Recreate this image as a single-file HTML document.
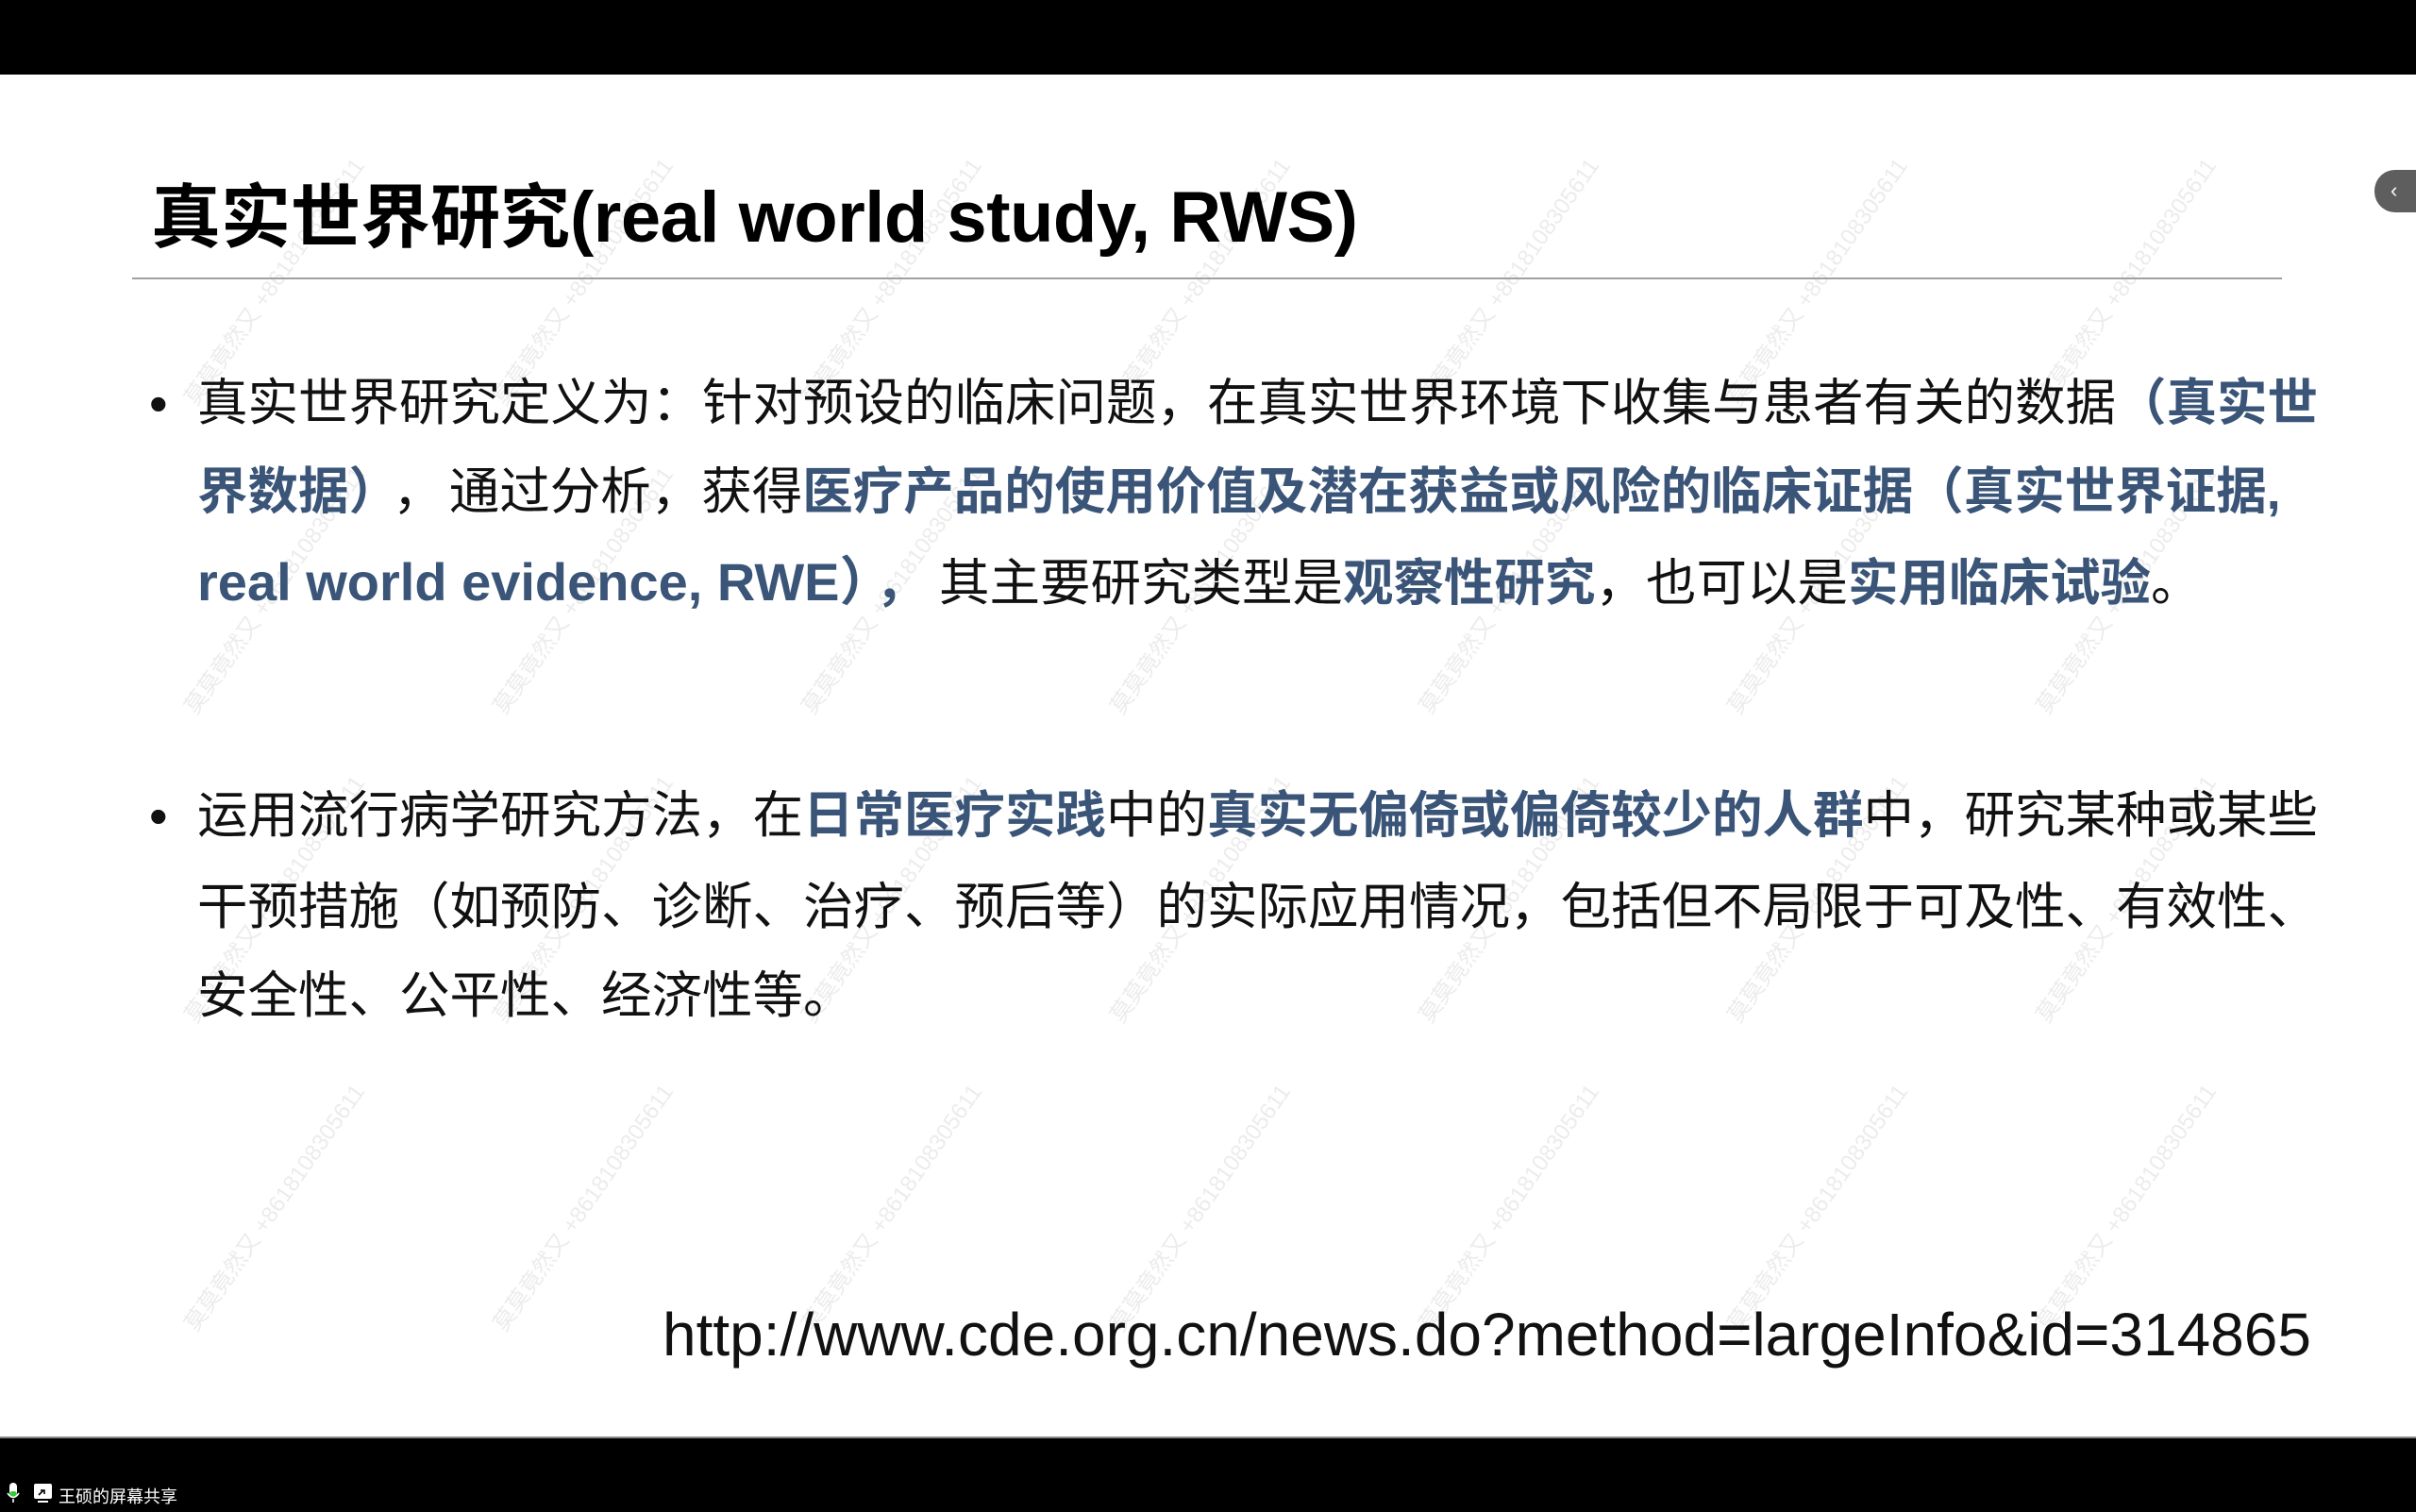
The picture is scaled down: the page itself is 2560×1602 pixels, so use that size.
<!DOCTYPE html>
<html><head><meta charset="utf-8"><style>
*{margin:0;padding:0}
body{width:2560px;height:1600px;background:#fff;position:relative;overflow:hidden;font-family:"Liberation Sans","Noto Sans CJK SC",sans-serif}
.top{position:absolute;left:0;top:0;width:2560px;height:79px;background:#000}
.bot{position:absolute;left:0;top:1522px;width:2560px;height:78px;background:#000;border-top:2px solid #888}
.title{position:absolute;left:160px;top:186px;font-size:74px;font-weight:bold;color:#000;white-space:nowrap;line-height:90px}
.title .en{font-family:"Liberation Sans",sans-serif;font-size:76px;letter-spacing:-0.5px}
.rule{position:absolute;left:140px;top:294px;width:2278px;height:2px;background:#a0a0a0}
.ln{position:absolute;left:209px;font-size:53.5px;line-height:96px;height:96px;white-space:nowrap;color:#111}
.b{color:#3a5578;font-weight:bold}
.dot{position:absolute;left:158px;font-size:56px;color:#111;line-height:96px}
.url{position:absolute;left:702px;top:1374px;font-family:"Liberation Sans",sans-serif;font-size:64px;line-height:80px;color:#111;white-space:nowrap}
.tab{position:absolute;left:2516px;top:180px;width:60px;height:45px;border-radius:22px 0 0 22px;background:#5e5e5e;color:#fff;font-size:22px;line-height:43px;padding-left:17px;box-sizing:border-box}
.wm{position:absolute;font-size:24px;color:#ececec;transform:rotate(-55deg);transform-origin:left top;white-space:nowrap}
.foot{position:absolute;left:62px;top:1572px;font-size:18px;color:#fff}
</style></head><body>
<div class="top"></div>
<div class="tab">&#8249;</div>

<div id="wms"></div>

<div class="title">真实世界研究<span class="en">(real world study, RWS)</span></div>
<div class="rule"></div>

<div class="dot" style="top:380px">•</div>
<div class="ln" style="top:380px">真实世界研究定义为：针对预设的临床问题，在真实世界环境下收集与患者有关的数据<span class="b">（真实世</span></div>
<div class="ln" style="top:474px"><span class="b">界数据）</span><span style="margin-left:20px">，</span><span style="margin-left:6px">通过分析，获得</span><span class="b">医疗产品的使用价值及潜在获益或风险的临床证据（真实世界证据,</span></div>
<div class="ln" style="top:569px"><span class="b" style="font-size:56px">real world evidence, RWE）</span><span class="b" style="margin-left:10px">，</span><span style="margin-left:14px">其主要研究类型是</span><span class="b">观察性研究</span>，也可以是<span class="b">实用临床试验</span>。</div>

<div class="dot" style="top:817px">•</div>
<div class="ln" style="top:817px">运用流行病学研究方法，在<span class="b">日常医疗实践</span>中的<span class="b">真实无偏倚或偏倚较少的人群</span>中，研究某种或某些</div>
<div class="ln" style="top:914px">干预措施（如预防、诊断、治疗、预后等）的实际应用情况，包括但不局限于可及性、有效性、</div>
<div class="ln" style="top:1008px">安全性、公平性、经济性等。</div>

<div class="url">http://www.cde.org.cn/news.do?method=largeInfo&amp;id=314865</div>

<div class="bot"></div>
<svg style="position:absolute;left:6px;top:1570px" width="60" height="28">
<rect x="4" y="1" width="8" height="15" rx="4" fill="#fff"/><rect x="4" y="10" width="8" height="6" rx="3" fill="#3c3"/>
<path d="M2 12 Q8 21 14 12 M8 18 V22" stroke="#fff" stroke-width="1.6" fill="none"/>
<rect x="30" y="2" width="19" height="16" rx="2" fill="#fff"/><path d="M35 14 L40 9 M37 9 H41 V13" stroke="#000" stroke-width="1.6" fill="none"/><rect x="34" y="20" width="11" height="2" fill="#fff"/>
</svg>
<div class="foot">王硕的屏幕共享</div>

<script>
var h='';
for(var c=0;c<7;c++){for(var r=0;r<4;r++){
 var x=185+c*327, y=415+r*327;
 h+='<div class="wm" style="left:'+x+'px;top:'+y+'px">莫莫竟然又 +8618108305611</div>';
}}
document.getElementById('wms').innerHTML=h;
</script>
</body></html>
